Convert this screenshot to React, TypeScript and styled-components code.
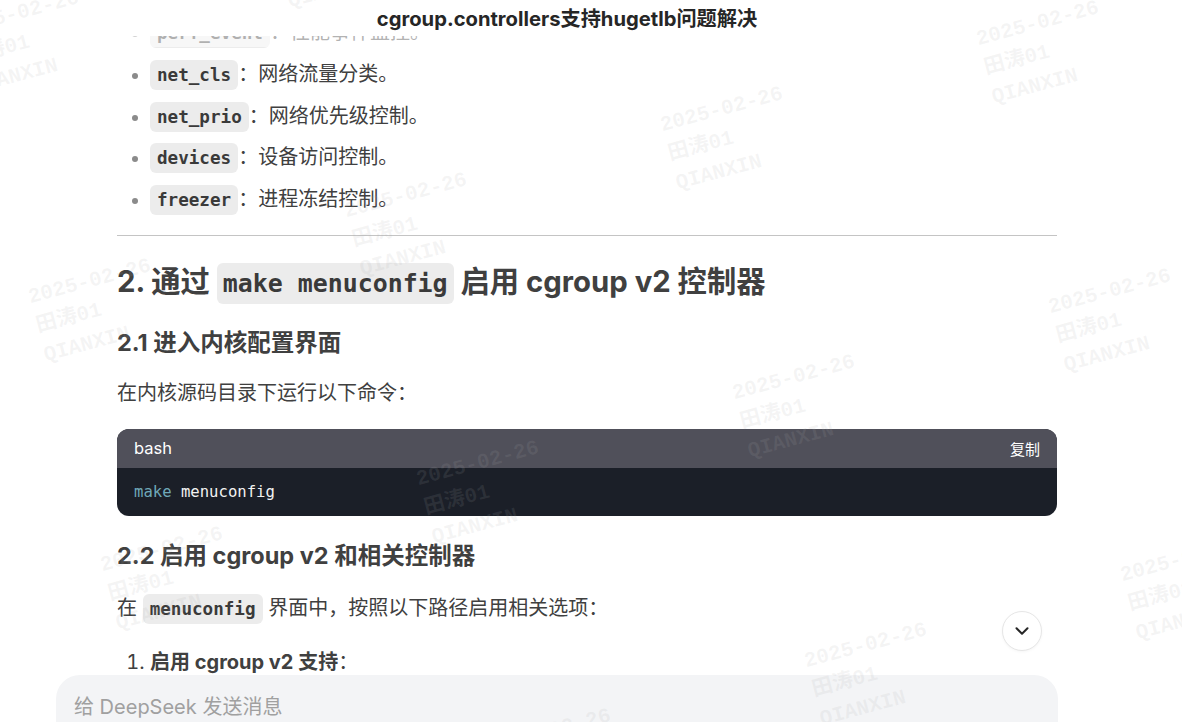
import React from 'react'
import styled, { createGlobalStyle } from 'styled-components'
import { ChevronDown } from 'lucide-react'

const GlobalStyle = createGlobalStyle`
  html, body {
    margin: 0;
    padding: 0;
    background: #fff;
  }
  body {
    font-family: Inter, "Noto Sans CJK SC", sans-serif;
    color: #404040;
  }
`

const SANS = `Inter, "Noto Sans CJK SC", sans-serif`
const MONO = `"DejaVu Sans Mono", "Noto Sans CJK SC", monospace`

const Page = styled.div`
  position: relative;
  width: 1182px;
  height: 722px;
  overflow: hidden;
  background: #fff;
`

const Article = styled.div`
  width: 940px;
  margin: 0 auto 0 117px;
  padding-top: 12px;
  font-family: ${SANS};
  font-size: 20px;
  color: #404040;
`

const TopBar = styled.div`
  position: absolute;
  top: 0;
  left: 0;
  right: 0;
  height: 47px;
  padding-right: 48px;
  display: flex;
  justify-content: center;
  background: linear-gradient(to bottom, #fff 0, #fff 36px, rgba(255, 255, 255, 0.6) 36px, rgba(255, 255, 255, 0.6) 47px);
  box-sizing: border-box;
`

const Title = styled.div`
  margin-top: 6px;
  font-family: ${SANS};
  font-size: 20.2px;
  line-height: 26px;
  font-weight: 700;
  color: #262626;
`

const BulletList = styled.ul`
  margin: 0;
  padding-left: 33px;
  list-style: disc;
  li {
    height: 41.75px;
    line-height: 41.75px;
  }
  li::marker {
    color: #8b8b8b;
    font-size: 18px;
  }
`

const Code = styled.code<{ $size?: number }>`
  font-family: ${MONO};
  font-weight: 700;
  font-size: ${p => p.$size ?? 17.6}px;
  line-height: 1;
  background: #ececec;
  color: #3a3a3a;
  border-radius: 6px;
  padding: ${p => (p.$size && p.$size > 20 ? '6px 6px' : '5px 7px')};
`

const Rule = styled.hr`
  margin: 14px 0 0;
  border: none;
  border-top: 1px solid #c4c4c4;
`

const H2 = styled.h2`
  margin: 26px 0 0;
  font-size: 29.3px;
  line-height: 40px;
  font-weight: 700;
  color: #404040;
`

const H3 = styled.h3<{ $gap: number }>`
  margin: ${p => p.$gap}px 0 0;
  font-size: 23.5px;
  line-height: 32px;
  font-weight: 700;
  color: #404040;
`

const Para = styled.p<{ $gap: number }>`
  margin: ${p => p.$gap}px 0 0;
  line-height: 32px;
`

const CodeBlock = styled.div`
  margin-top: 20px;
  border-radius: 12px;
  overflow: hidden;
  background: #1b1f28;
`

const CodeHead = styled.div`
  height: 39px;
  background: #50505a;
  display: flex;
  align-items: center;
  justify-content: space-between;
  padding: 0 17px;
  color: #fff;
  font-size: 16.5px;
  span:last-child {
    font-size: 15px;
  }
`

const CodeBody = styled.pre`
  margin: 0;
  height: 48px;
  padding: 0 17px;
  display: flex;
  align-items: center;
  font-family: ${MONO};
  font-size: 15.6px;
  color: #f2f2f2;
`

const Keyword = styled.span`
  color: #6fa8b8;
`

const NumList = styled.ol`
  margin: 22px 0 0;
  padding-left: 33px;
  li {
    line-height: 32px;
  }
  li::marker {
    color: #404040;
  }
  b {
    font-weight: 700;
  }
`

const ScrollButton = styled.button`
  position: absolute;
  left: 1002px;
  top: 611px;
  width: 40px;
  height: 40px;
  border-radius: 50%;
  border: 1px solid #e6e6e6;
  background: #fff;
  display: flex;
  align-items: center;
  justify-content: center;
  padding: 0;
  color: #262626;
  box-shadow: 0 1px 3px rgba(0, 0, 0, 0.04);
`

const Composer = styled.div`
  position: absolute;
  left: 56px;
  top: 675px;
  width: 1002px;
  height: 120px;
  border-radius: 24px;
  background: #f3f4f6;
  box-sizing: border-box;
  padding: 19px 18px;
`

const Placeholder = styled.div`
  font-family: ${SANS};
  font-size: 20px;
  line-height: 26px;
  color: #a0a0a0;
`

const MarkLayer = styled.div`
  position: absolute;
  inset: 0;
  pointer-events: none;
`

const Mark = styled.div`
  position: absolute;
  transform: rotate(-15deg);
  transform-origin: 0 0;
  font-family: "Liberation Mono", "Noto Sans CJK SC", monospace;
  font-weight: 700;
  font-size: 21px;
  line-height: 30px;
  color: rgba(170, 170, 170, 0.13);
  white-space: nowrap;
`

const marks: { x: number; y: number }[] = []
for (let i = -3; i <= 5; i++) {
  for (let j = -2; j <= 3; j++) {
    const x = 25 + i * 316 + j * 72
    const y = 300 - i * 86 + j * 268
    if (x > -200 && x < 1250 && y > -120 && y < 780) marks.push({ x, y })
  }
}

const items = [
  { name: 'perf_event', text: '性能事件监控。' },
  { name: 'net_cls', text: '网络流量分类。' },
  { name: 'net_prio', text: '网络优先级控制。' },
  { name: 'devices', text: '设备访问控制。' },
  { name: 'freezer', text: '进程冻结控制。' },
]

export default function App() {
  return (
    <Page>
      <GlobalStyle />
      <Article>
        <BulletList>
          {items.map(item => (
            <li key={item.name}>
              <Code>{item.name}</Code>：{item.text}
            </li>
          ))}
        </BulletList>
        <Rule />
        <H2>
          2. 通过 <Code $size={24.9}>make menuconfig</Code> 启用 cgroup v2 控制器
        </H2>
        <H3 $gap={25}>2.1 进入内核配置界面</H3>
        <Para $gap={18}>在内核源码目录下运行以下命令：</Para>
        <CodeBlock>
          <CodeHead>
            <span>bash</span>
            <span>复制</span>
          </CodeHead>
          <CodeBody>
            <Keyword>make</Keyword>&nbsp;menuconfig
          </CodeBody>
        </CodeBlock>
        <H3 $gap={24}>2.2 启用 cgroup v2 和相关控制器</H3>
        <Para $gap={20}>
          在 <Code>menuconfig</Code> 界面中，按照以下路径启用相关选项：
        </Para>
        <NumList>
          <li>
            <b>启用 cgroup v2 支持</b>：
          </li>
        </NumList>
      </Article>
      <TopBar>
        <Title>cgroup.controllers支持hugetlb问题解决</Title>
      </TopBar>
      <ScrollButton>
        <ChevronDown size={22} strokeWidth={2.2} />
      </ScrollButton>
      <Composer>
        <Placeholder>给 DeepSeek 发送消息</Placeholder>
      </Composer>
      <MarkLayer>
        {marks.map((m, i) => (
          <Mark key={i} style={{ left: m.x, top: m.y - 16 }}>
            2025-02-26
            <br />
            田涛01
            <br />
            QIANXIN
          </Mark>
        ))}
      </MarkLayer>
    </Page>
  )
}
